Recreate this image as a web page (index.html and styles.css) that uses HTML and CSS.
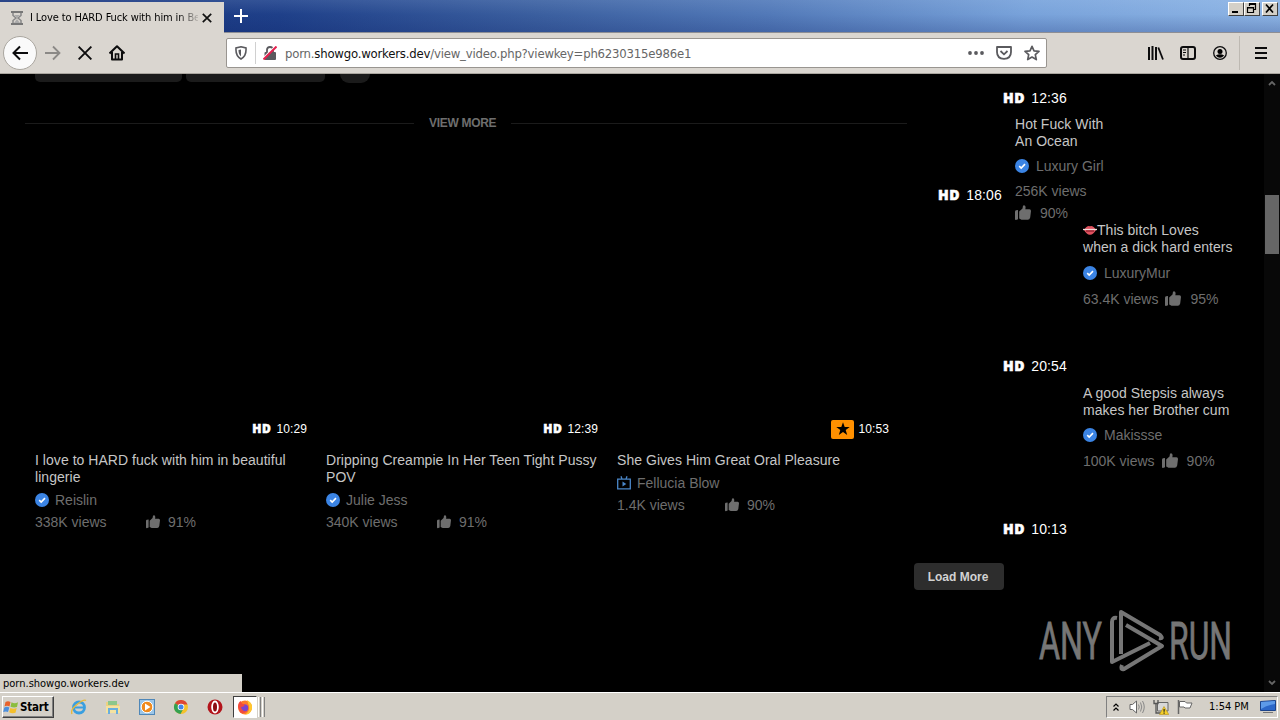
FILE: index.html
```
<!DOCTYPE html>
<html lang="en">
<head>
<meta charset="UTF-8" />
<meta name="viewport" content="width=device-width, initial-scale=1" />
<title>I Love to HARD Fuck with him in Be</title>
<link rel="stylesheet" href="styles.css">
</head>
<body>
  <!-- shared icons -->
  <svg class="defs" width="0" height="0">
    <symbol id="thumb" viewBox="0 0 16 16">
      <path d="M0 6.500Q0 5.500 1 5.300L3 5V14.200L.9 15Q0 15 0 14Z" />
      <path d="M4.200 6.500 7.500 3.500 8 .8Q9 -.2 10 .7Q11 2 10.300 4.200H14.500Q16 4.500 16 6L15.200 12.500Q14.600 14.800 12.800 14.800H6.500L4.200 13.600Z" />
    </symbol>
    <symbol id="verified" viewBox="0 0 14 14">
      <circle cx="7" cy="7" r="7" fill="#3b84e4" />
      <path d="M4.200 7.200 6.200 9.100 10 5.100" fill="none" stroke="#fff" stroke-width="1.600" />
    </symbol>
  </svg>

  <div class="titlebar">
    <div class="tab">
      <svg class="hourglass" viewBox="0 0 12 14" width="12" height="14">
        <path d="M0 1H12M0 13H12" stroke="#777" stroke-width="2" />
        <path d="M2 2V4.500L5 7 2 9.500V12M10 2V4.500L7 7 10 9.500V12" fill="none" stroke="#888" stroke-width="1.500" />
        <path d="M3 4H9L6 6.500ZM6 8 9 12H3Z" fill="#aaa" />
      </svg>
      <span class="tab-title">I Love to HARD Fuck with him in Be</span>
      <svg class="tab-close" viewBox="0 0 10 10" width="10" height="10"><path d="M.8.8 9.200 9.200M9.200.8.8 9.200" stroke="#111" stroke-width="1.700" /></svg>
    </div>
    <svg class="new-tab" viewBox="0 0 14 14" width="14" height="14"><path d="M7 0V14M0 7H14" stroke="#fff" stroke-width="2" /></svg>
    <div class="win-buttons">
      <button class="win-btn" aria-label="Minimize"><svg viewBox="0 0 12 10" width="12" height="10"><path d="M3 9H9" stroke="#000" stroke-width="2" /></svg></button>
      <button class="win-btn" aria-label="Restore"><svg viewBox="0 0 12 10" width="12" height="10"><path d="M4.500 3V.5H10.500V6.500H8.500M4 1.500H11M2.500 4.500H8.500V9.500H2.500ZM2 5H9" fill="none" stroke="#000" stroke-width="1.200" /></svg></button>
      <button class="win-btn close" aria-label="Close"><svg viewBox="0 0 12 10" width="12" height="10"><path d="M3 1.500 10 9.500M10 1.500 3 9.500" stroke="#000" stroke-width="1.700" /></svg></button>
    </div>
  </div>

  <div class="toolbar">
    <div class="nav-buttons">
      <span class="back"><svg viewBox="0 0 16 16" width="16" height="16"><path d="M16 8H1.500M8 1.500 1.500 8 8 14.500" fill="none" stroke="#0c0c0d" stroke-width="2" /></svg></span>
      <svg class="forward" viewBox="0 0 16 16" width="16" height="16"><path d="M0 8H14.500M8 1.500 14.500 8 8 14.500" fill="none" stroke="#8b8986" stroke-width="1.800" /></svg>
      <svg class="stop" viewBox="0 0 14 14" width="14" height="14"><path d="M.6.6 13.400 13.400M13.400.6.6 13.400" stroke="#0c0c0d" stroke-width="1.900" /></svg>
      <svg class="home" viewBox="0 0 16 16" width="16" height="16"><path d="M.5 8.500 8 1.200 15.500 8.500M3 7V14.500H13V7" fill="none" stroke="#0c0c0d" stroke-width="2" stroke-linejoin="round" /><path d="M6.500 14V9H9.500V14" fill="none" stroke="#0c0c0d" stroke-width="1.600" /></svg>
    </div>
    <div class="urlbar">
      <svg class="shield" viewBox="0 0 12 14" width="12" height="14"><path d="M6 .8 11 2Q11.600 10 6 13Q.4 10 1 2Z" fill="none" stroke="#5a5a5e" stroke-width="1.600" /><path d="M6 3.500V10.500Q3.500 8.500 3.500 4Z" fill="#5a5a5e" /></svg>
      <span class="divider"></span>
      <svg class="lock" viewBox="0 0 14 14" width="14" height="14"><path d="M4 7V3.800Q4 1 7 1T10 3.800V7" fill="none" stroke="#5a5a5e" stroke-width="1.800" /><rect x="1.500" y="6" width="11.500" height="8" rx="1" fill="#5a5a5e" /><path d="M.2 12.200 12 .4" stroke="#fff" stroke-width="1.500" /><path d="M.5 13.500 13.500.5" stroke="#e4204f" stroke-width="2" /></svg>
      <span class="url">porn.<b>showgo.workers.dev</b>/view_video.php?viewkey=ph6230315e986e1</span>
      <svg class="dots" viewBox="0 0 16 4" width="16" height="4" fill="#5a5a5e"><circle cx="2" cy="2" r="1.900" /><circle cx="8" cy="2" r="1.900" /><circle cx="14" cy="2" r="1.900" /></svg>
      <svg class="pocket" viewBox="0 0 16 14" width="16" height="14" fill="none" stroke="#5a5a5e"><path d="M1 1H15V6Q15 12.500 8 12.900Q1 12.500 1 6Z" stroke-width="1.800" stroke-linejoin="round" /><path d="M4.500 5 8 8.300 11.500 5" stroke-width="1.800" /></svg>
      <svg class="star" viewBox="0 0 16 16" width="16" height="16"><path d="M8 1.300 10 5.800 15 6.300 11.300 9.700 12.300 14.600 8 12.100 3.700 14.600 4.700 9.700 1 6.300 6 5.800Z" fill="none" stroke="#5a5a5e" stroke-width="1.700" stroke-linejoin="round" /></svg>
    </div>
    <div class="tools">
      <svg viewBox="0 0 16 14" width="16" height="14"><path d="M1 1V14M4.500 0V14M8 1V14" stroke="#0c0c0d" stroke-width="2" /><path d="M10.300 1.500 15 13.500" stroke="#0c0c0d" stroke-width="1.800" /></svg>
      <svg viewBox="0 0 16 14" width="16" height="14"><rect x="1" y="1" width="14" height="12" rx="2" fill="none" stroke="#0c0c0d" stroke-width="2" /><path d="M8 1V13M3 4H6M3 6.500H6M3 9H5" stroke="#0c0c0d" stroke-width="1.200" /></svg>
      <svg viewBox="0 0 14 14" width="14" height="14"><circle cx="7" cy="7" r="6.300" fill="none" stroke="#0c0c0d" stroke-width="1.300" /><circle cx="7" cy="5.400" r="2.500" /><path d="M2.800 9.500Q7 7 11.200 9.500 7 14 2.800 9.500Z" /></svg>
      <span class="separator"></span>
      <svg viewBox="0 0 12 12" width="12" height="12"><path d="M0 1H12M0 6H12M0 11H12" stroke="#0c0c0d" stroke-width="2" /></svg>
    </div>
  </div>

  <div class="viewport">
    <main class="content">
      <div class="chips"><span class="chip"></span><span class="chip second"></span><span class="chip round"></span></div>
      <div class="view-more"><span>VIEW MORE</span></div>
      <div class="videos">
        <div class="video">
          <div class="duration"><b>HD</b><span>10:29</span></div>
          <div class="title">I love to HARD fuck with him in beautiful lingerie</div>
          <div class="user"><svg class="badge"><use href="#verified" /></svg>Reislin</div>
          <div class="stats"><span class="views">338K views</span><svg class="thumb"><use href="#thumb" /></svg>91%</div>
        </div>
        <div class="video">
          <div class="duration"><b>HD</b><span>12:39</span></div>
          <div class="title">Dripping Creampie In Her Teen Tight Pussy POV</div>
          <div class="user"><svg class="badge"><use href="#verified" /></svg>Julie Jess</div>
          <div class="stats"><span class="views">340K views</span><svg class="thumb"><use href="#thumb" /></svg>91%</div>
        </div>
        <div class="video">
          <div class="duration premium">
            <span class="premium-icon"><svg viewBox="0 0 14 14" width="14" height="14"><path d="M7 .3 8.700 5H13.700L9.700 8.100 11.200 13 7 10.100 2.800 13 4.300 8.100.3 5H5.300Z" /></svg></span>
            <span>10:53</span>
          </div>
          <div class="title">She Gives Him Great Oral Pleasure</div>
          <div class="user channel"><svg class="badge" viewBox="0 0 14 14"><path d="M.7 3.200H13.300V12.800H.7ZM4 .3 5 3M10 .3 9 3" fill="none" stroke="#4a86c8" stroke-width="1.300" /><path d="M5.500 5.500 9.300 8 5.500 10.500Z" fill="#4a86c8" /></svg>Fellucia Blow</div>
          <div class="stats"><span class="views short">1.4K views</span><svg class="thumb"><use href="#thumb" /></svg>90%</div>
        </div>
      </div>
    </main>

    <aside class="sidebar">
      <div class="side-duration"><b>HD</b><span>12:36</span></div>
      <div class="side-row">
        <div class="side-duration low"><b>HD</b><span>18:06</span></div>
        <div class="side-info">
          <div class="title">Hot Fuck With<br>An Ocean</div>
          <div class="user"><svg class="badge"><use href="#verified" /></svg>Luxury Girl</div>
          <div class="stats">256K views</div>
          <div class="rating"><svg class="thumb"><use href="#thumb" /></svg>90%</div>
        </div>
      </div>
      <div class="side-info shifted">
        <div class="title"><svg class="lips" viewBox="0 0 14 10"><path d="M1 5Q4 0 7 1.200 10 0 13 5 10 10 7 9.700 4 10 1 5Z" fill="#e0525f" /><path d="M0 4.500H14" stroke="#f4d9d9" stroke-width="1.300" /><path d="M3 6H11" stroke="#7b1020" stroke-width="1" /></svg>This bitch Loves<br>when a dick hard enters</div>
        <div class="user"><svg class="badge"><use href="#verified" /></svg>LuxuryMur</div>
        <div class="stats">63.4K views<svg class="thumb"><use href="#thumb" /></svg>95%</div>
      </div>
      <div class="side-duration third"><b>HD</b><span>20:54</span></div>
      <div class="side-info shifted last">
        <div class="title">A good Stepsis always<br>makes her Brother cum</div>
        <div class="user"><svg class="badge"><use href="#verified" /></svg>Makissse</div>
        <div class="stats">100K views<svg class="thumb"><use href="#thumb" /></svg>90%</div>
      </div>
      <div class="side-duration fourth"><b>HD</b><span>10:13</span></div>
      <button class="load-more">Load More</button>
    </aside>

    <div class="scrollbar">
      <svg viewBox="0 0 8 6" width="8" height="6"><path d="M1 5 4 2 7 5" fill="none" stroke="#666" stroke-width="1.800" /></svg>
      <span class="scroll-thumb"></span>
      <svg class="down" viewBox="0 0 8 6" width="8" height="6"><path d="M1 1 4 4 7 1" fill="none" stroke="#666" stroke-width="1.800" /></svg>
    </div>

    <div class="status">porn.showgo.workers.dev</div>
    <svg class="watermark" viewBox="0 0 200 64" width="200" height="64">
      <g fill="#767676" stroke="#767676" stroke-width=".8">
        <text x="1" y="50" textLength="63" lengthAdjust="spacingAndGlyphs">ANY</text>
        <text x="131" y="50" textLength="63" lengthAdjust="spacingAndGlyphs">RUN</text>
      </g>
      <g fill="none" stroke="#767676" stroke-width="4" stroke-linejoin="round">
        <path d="M79 9Q74 8 74 13V53L112 34" />
        <path d="M83 45V3L122 26Q126 30 121 29" />
        <path d="M88 16 124 37 86 60Q82 61 84 56" />
      </g>
    </svg>
  </div>

  <div class="taskbar">
    <button class="start">
      <svg viewBox="0 0 16 14" width="16" height="14"><path d="M2.500 2Q5 .5 7.500 2L6.500 6.500Q4 5 1.500 6.500Z" fill="#e8622c" /><path d="M8.500 2.300Q11.500 4 15 2.300L14 7Q11 8 7.500 6.800Z" fill="#8bbd3d" /><path d="M1.300 7.500Q4 6 6.300 7.500L5 12Q3 10.800.2 12Z" fill="#4c8fdd" /><path d="M7.300 8Q10.500 9.300 13.700 8L12.500 12.800Q9 13.800 6.200 12.300Z" fill="#f4bf2c" /></svg>
      Start
    </button>
    <div class="launch">
      <svg viewBox="0 0 16 16" width="16" height="16"><circle cx="8" cy="8.500" r="5.500" fill="none" stroke="#3a9fe0" stroke-width="2.800" /><path d="M4 8.500H13" stroke="#3a9fe0" stroke-width="2" /><path d="M1 15Q-1 11 6 5.500T15 1.500" fill="none" stroke="#e8b93b" stroke-width="1.400" /></svg>
      <svg viewBox="0 0 16 16" width="16" height="16"><path d="M1 3H6L7 5H14V14H1Z" fill="#edd182" /><path d="M3 2H12V6H3Z" fill="#8cc78b" /><path d="M1 7H15V14H1Z" fill="#f4e2a0" /><path d="M4 15V10H12V15" fill="none" stroke="#69aede" stroke-width="2" /></svg>
      <svg viewBox="0 0 16 16" width="16" height="16"><rect x=".5" y=".5" width="15" height="15" fill="#9cc6e8" stroke="#4f87b8" /><circle cx="8" cy="8" r="5.800" fill="#f08a1d" stroke="#fff" /><path d="M6 4.500 11.500 8 6 11.500Z" fill="#fff" /></svg>
      <svg viewBox="0 0 16 16" width="16" height="16"><circle cx="8" cy="8" r="7" fill="#f4c22b" /><path d="M8 8 2 4.300A7 7 0 0 1 14.500 5.500H8Z" fill="#dd4635" /><path d="M8 8 2 4.300A7 7 0 0 0 7.500 15L10.500 9.500Z" fill="#34a151" /><circle cx="8" cy="8" r="3.300" fill="#fff" /><circle cx="8" cy="8" r="2.500" fill="#4285e8" /></svg>
      <svg viewBox="0 0 16 16" width="16" height="16"><circle cx="8" cy="8" r="7.500" fill="#b3141b" /><ellipse cx="8" cy="8" rx="2.900" ry="5.500" fill="#8d0c12" stroke="#fff" stroke-width="1.800" /></svg>
    </div>
    <div class="active-task">
      <svg viewBox="0 0 16 16" width="16" height="16"><circle cx="8" cy="8.500" r="7" fill="#ff7a2b" /><path d="M10 1Q16 4 15 10 13 16 8 15.500 13 13 12 7Z" fill="#ffc62e" /><circle cx="7.500" cy="9" r="3.700" fill="#7a45cf" /><path d="M1 8Q1 3 4 2 4 5 8 5.500 7 8 4 8 5 13 10 12 6 16 3 13Z" fill="#f24a3e" /></svg>
    </div>
    <span class="grip"></span><span class="grip"></span>
    <div class="tray">
      <svg class="chevrons" viewBox="0 0 6 8" width="6" height="8"><path d="M.5 3.500 3 1 5.500 3.500M.5 7.500 3 5 5.500 7.500" fill="none" stroke="#000" stroke-width="1.200" /></svg>
      <svg viewBox="0 0 16 14" width="16" height="14"><path d="M1 4.500H3.500L7.500 1V13L3.500 9.500H1Z" fill="#fff" stroke="#666" /><path d="M9.500 4.500Q11 7 9.500 9.500M11.500 2.500Q14 7 11.500 11.500M13.500 1Q17 7 13.500 13" fill="none" stroke="#888" /></svg>
      <svg viewBox="0 0 16 16" width="16" height="16"><path d="M4.500 3.500H15V12H4.500Z" fill="#d8d8d8" stroke="#666" /><path d="M1 1V4.500H5V1M3 5V14H8" fill="none" stroke="#555" stroke-width="1.300" /><path d="M11 7.500 15.800 15.500H6.500Z" fill="#f5cf27" stroke="#b59118" stroke-width=".6" /><path d="M11.100 10V12.700M11.100 13.500V14.700" stroke="#222" stroke-width="1.200" /></svg>
      <svg viewBox="0 0 16 14" width="16" height="14"><path d="M1.500 0V14" stroke="#666" stroke-width="1.500" /><path d="M2.500 1.500H8L9.500 3H15L13 8H8L7 7H2.500Z" fill="#fff" stroke="#666" /></svg>
      <span class="clock">1:54 PM</span>
      <svg class="monitor" viewBox="0 0 16 14" width="16" height="14"><path d="M.5 1.500 15.500.5V10.500H.5Z" fill="#2c67c8" stroke="#1b438b" /><path d="M1 2 15 1V4Q7 5 1 9Z" fill="#5d9ae8" /><path d="M3 12.500H13" stroke="#777" /></svg>
    </div>
  </div>
</body>
</html>
```
FILE: styles.css
```
:root {
  --chrome: #dad6d0;
  --classic: #d4d0c8;
  --ui-font: "DejaVu Sans Condensed", "DejaVu Sans", sans-serif;
  --muted: #6e6e6e;
}

* {
  box-sizing: border-box;
}
body {
  margin: 0;
  width: 1280px;
  height: 720px;
  overflow: hidden;
  display: flex;
  flex-direction: column;
  background: #000;
  font-family: "Liberation Sans", Arial, sans-serif;
}
svg {
  flex-shrink: 0;
}
button {
  padding: 0;
  border: none;
  font-family: inherit;
}
.defs {
  position: absolute;
}

/* title bar with tab */
.titlebar {
  height: 33px;
  flex-shrink: 0;
  display: flex;
  align-items: center;
  background:
    linear-gradient(180deg, rgba(200,225,255,0.12), transparent 45%, rgba(10,30,100,0.22)),
    linear-gradient(100deg, #17327a 0, #1f4089 22%, #3b5f9f 42%, #5279b8 60%, #78a2da 80%, #8db4e4 100%);
  border-bottom: 1px solid #8d8e94;
}
.tab {
  width: 224px;
  height: 31px;
  margin-top: 3px;
  padding: 0 11px;
  display: flex;
  align-items: center;
  background: var(--chrome);
}
.tab-title {
  width: 168px;
  margin-left: 7px;
  overflow: hidden;
  white-space: nowrap;
  font-family: var(--ui-font);
  font-stretch: condensed;
  font-size: 11px;
  letter-spacing: -0.12px;
  -webkit-mask-image: linear-gradient(90deg, #000 88%, rgba(0,0,0,0.15));
}
.tab-close {
  margin-left: 4px;
}
.new-tab {
  margin-left: 10px;
}
.win-buttons {
  display: flex;
  align-self: flex-start;
  margin: 2px 2px 0 auto;
}
.win-btn {
  width: 16px;
  height: 14px;
  display: flex;
  background: var(--classic);
  border: 1px solid;
  border-color: #fff #404040 #404040 #fff;
}
.win-btn.close {
  margin-left: 2px;
}

/* toolbar */
.toolbar {
  height: 41px;
  flex-shrink: 0;
  display: flex;
  align-items: center;
  background: var(--chrome);
  border-bottom: 1px solid #aaa69f;
}
.nav-buttons {
  width: 226px;
  padding-left: 3px;
  display: flex;
  align-items: center;
}
.back {
  width: 34px;
  height: 34px;
  display: flex;
  align-items: center;
  justify-content: center;
  background: #fafafa;
  border: 1px solid #aaa69f;
  border-radius: 50%;
}
.forward {
  margin-left: 8px;
}
.stop {
  margin-left: 17px;
}
.home {
  margin-left: 17px;
}
.urlbar {
  width: 821px;
  height: 30px;
  padding: 0 6px 0 8px;
  display: flex;
  align-items: center;
  background: #fff;
  border: 1px solid #999590;
  border-radius: 2px;
}
.divider {
  width: 1px;
  height: 22px;
  margin: 0 7px 0 8px;
  background: #d0d0d0;
}
.url {
  margin-left: 8px;
  font-family: var(--ui-font);
  font-stretch: condensed;
  font-size: 13px;
  letter-spacing: -0.2px;
  color: #666;
}
.url b {
  font-weight: 400;
  color: #111;
}
.dots {
  margin-left: auto;
}
.pocket {
  margin-left: 12px;
}
.star {
  margin-left: 12px;
}
.tools {
  margin-left: auto;
  padding-right: 13px;
  display: flex;
  align-items: center;
  gap: 16px;
}
.tools svg:nth-child(3) {
  margin: 0 1px;
}
.separator {
  width: 1px;
  height: 34px;
  margin: 0 -1px 0 -5px;
  background: #bdb9b2;
}

/* page */
.viewport {
  position: relative;
  height: 618px;
  display: flex;
  color: #c6c6c6;
  font-size: 14px;
}
.content {
  width: 914px;
  padding-left: 25px;
}
.chips {
  height: 8px;
  padding-left: 10px;
  display: flex;
  gap: 4px;
}
.chip {
  width: 147px;
  background: #1b1b1b;
  border-radius: 0 0 5px 5px;
}
.chip.second {
  width: 139px;
}
.chip.round {
  width: 30px;
  height: 9px;
  margin-left: 11px;
  border-radius: 0 0 15px 15px;
}
.view-more {
  width: 883px;
  height: 16px;
  margin-top: 33px;
  padding-right: 1px;
  display: flex;
  align-items: center;
  gap: 15px;
  color: var(--muted);
  font-size: 12px;
  font-weight: 700;
  letter-spacing: -0.3px;
}
.view-more::before,
.view-more::after {
  content: "";
  width: 389px;
  height: 1px;
  background: #1b1b1b;
}
.view-more::after {
  width: auto;
  flex: 1;
}
.videos {
  margin: 288px 0 0 10px;
  display: flex;
  gap: 19px;
}
.video {
  width: 272px;
}
.duration {
  height: 20px;
  margin-bottom: 13px;
  display: flex;
  align-items: center;
  justify-content: flex-end;
  gap: 5px;
  color: #fff;
  font-size: 12px;
  letter-spacing: 0.1px;
}
.duration b,
.side-duration b {
  margin-top: -1px;
  font-family: "Open Sans", sans-serif;
  font-weight: 800;
  letter-spacing: 0.6px;
  -webkit-text-stroke: 0.5px #fff;
}
.duration.premium {
  gap: 4px;
}
.premium-icon {
  width: 23px;
  height: 19px;
  display: flex;
  align-items: center;
  justify-content: center;
  background: #ff9000;
  border-radius: 2px;
}
.title {
  line-height: 17px;
  margin-bottom: 3px;
  letter-spacing: 0.04px;
}
.video .title {
  margin-right: -8px;
}
.user,
.stats,
.rating {
  height: 22px;
  display: flex;
  align-items: center;
  color: var(--muted);
}
.badge {
  width: 14px;
  height: 14px;
  margin-right: 6px;
}
.views {
  width: 111px;
}
.views.short {
  width: 108px;
}
.thumb {
  width: 14px;
  height: 14px;
  margin-right: 8px;
  fill: var(--muted);
}

/* sidebar, durations sit left of the titles */
.sidebar {
  width: 350px;
}
.side-duration {
  height: 18px;
  margin: 15px 0 0 89px;
  display: flex;
  align-items: center;
  gap: 6px;
  color: #fff;
  letter-spacing: 0.15px;
}
.side-duration.low {
  width: 77px;
  margin: 79px 0 0 24px;
}
.side-duration.third {
  margin-top: 45px;
}
.side-duration.fourth {
  margin-top: 46px;
}
.side-row {
  height: 115px;
  display: flex;
}
.side-info {
  padding-top: 9px;
}
.side-info .title {
  margin-bottom: 3px;
}
.side-info .user {
  height: 25px;
}
.side-info .stats {
  height: 26px;
}
.side-info .badge {
  margin-right: 7px;
}
.side-info .rating {
  height: 17px;
}
.side-info .thumb {
  width: 16px;
  height: 16px;
  margin-right: 9px;
}
.side-info.shifted {
  margin-left: 169px;
  padding-top: 0;
}
.shifted .title {
  margin-bottom: 4px;
}
.shifted .user {
  height: 26px;
}
.side-info.last {
  padding-top: 10px;
}
.last .title {
  margin-bottom: 3px;
}
.shifted .thumb {
  margin-left: 7px;
}
.lips {
  width: 14px;
  height: 10px;
}
.load-more {
  display: block;
  width: 90px;
  height: 27px;
  margin-top: 25px;
  padding-right: 2px;
  background: #2d2d2d;
  border-radius: 4px;
  color: #d2d2d2;
  font-size: 12px;
  font-weight: 700;
}

.scrollbar {
  width: 16px;
  padding: 6px 0;
  display: flex;
  flex-direction: column;
  align-items: center;
  background: #080808;
}
.scroll-thumb {
  width: 14px;
  height: 59px;
  margin-top: 109px;
  background: #666;
}
.scrollbar .down {
  margin-top: auto;
}

.status {
  position: absolute;
  left: 0;
  bottom: 0;
  width: 242px;
  height: 18px;
  padding-left: 3px;
  background: var(--classic);
  color: #000;
  font-family: var(--ui-font);
  font-stretch: condensed;
  font-size: 11px;
  line-height: 20px;
}
.watermark {
  position: absolute;
  left: 1038px;
  top: 535px;
  font-family: Roboto, sans-serif;
  font-size: 52px;
}

/* taskbar */
.taskbar {
  height: 28px;
  display: flex;
  align-items: center;
  background: var(--classic);
  border-top: 1px solid #fff;
  font-family: var(--ui-font);
  font-stretch: condensed;
  font-size: 11px;
}
.start {
  width: 52px;
  height: 22px;
  margin-left: 2px;
  display: flex;
  align-items: center;
  gap: 1px;
  background: var(--classic);
  border: 1px solid;
  border-color: #fff #404040 #404040 #fff;
  box-shadow: inset -1px -1px #808080;
  font-size: 11.5px;
  font-weight: 700;
  letter-spacing: -0.2px;
}
.launch {
  margin-left: 17px;
  display: flex;
  gap: 18px;
}
.active-task {
  width: 24px;
  height: 22px;
  margin-left: 10px;
  display: flex;
  align-items: center;
  justify-content: center;
  background: #fff;
  border: 1px solid;
  border-color: #404040 #fff #fff #404040;
}
.grip {
  width: 3px;
  height: 20px;
  margin-left: 1px;
  border-left: 1px solid #fff;
  border-right: 1px solid #808080;
}
.tray {
  width: 172px;
  height: 22px;
  margin: 0 2px 0 auto;
  padding-left: 6px;
  display: flex;
  align-items: center;
  gap: 8px;
  border: 1px solid;
  border-color: #808080 #fff #fff #808080;
}
.chevrons {
  margin-right: 2px;
}
.clock {
  margin: 0 3px 0 8px;
  white-space: nowrap;
}
```
